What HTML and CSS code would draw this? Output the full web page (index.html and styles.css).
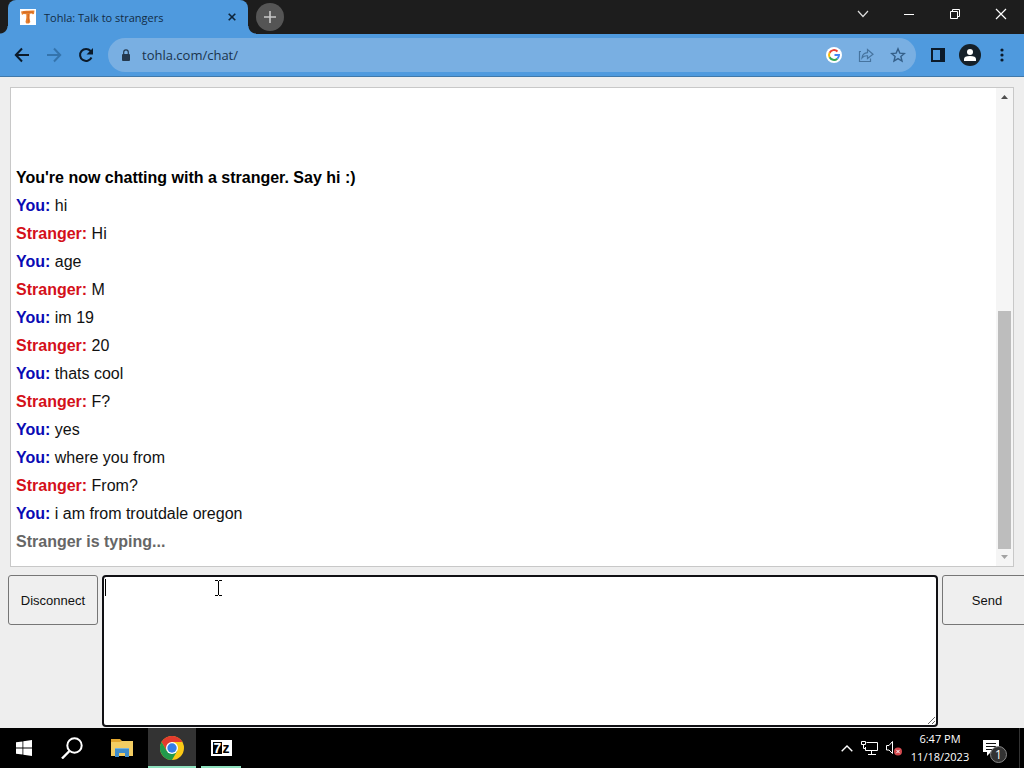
FILE: index.html
```
<!DOCTYPE html>
<html lang="en">
<head>
<meta charset="utf-8">
<title>Tohla: Talk to strangers</title>
<link rel="stylesheet" href="styles.css">
</head>
<body>
<div class="desktop">
  <header class="titlebar">
    <div class="tab">
      <svg class="favicon" width="16" height="16" viewBox="0 0 16 16"><path fill="#fff" d="M0 0h16v16H0z"/><path fill="#e8812f" d="M1 2.500q3.500-1 7-.7 3.500-.6 6.500-.3L14 5l-1.500.3L12 4.500 9.800 4.800 9.600 9l.7 4-1.300 1.500H6.300L5.500 13l.8-4V5.200L3.500 5 2 6z"/><path d="M3 3.200h10M8.300 5v8.500" stroke="#c9601c" stroke-width=".8" fill="none"/></svg>
      <span class="tab-title">Tohla: Talk to strangers</span>
      <button class="tab-close" aria-label="Close tab"><svg width="8" height="8" viewBox="0 0 8 8"><path d="M.7.7l6.600 6.600M7.300.7L.7 7.300" stroke="#0e2438" stroke-width="1.600"/></svg></button>
    </div>
    <button class="new-tab" aria-label="New tab"><svg width="12" height="12" viewBox="0 0 12 12"><path d="M6 0v12M0 6h12" stroke="#c8c8c8" stroke-width="1.600"/></svg></button>
    <div class="window-controls">
      <button aria-label="Search tabs"><svg width="12" height="12" viewBox="0 0 12 12"><path d="M1 3l5 5.500L11 3" fill="none" stroke="#ddd" stroke-width="1.200"/></svg></button>
      <button aria-label="Minimize"><svg width="12" height="12" viewBox="0 0 12 12"><path d="M1 6.500h10" stroke="#fff"/></svg></button>
      <button aria-label="Restore"><svg width="12" height="12" viewBox="0 0 12 12"><path d="M1.500 3.500h7v7h-7zM3.500 3V1.500h7v7H9" fill="none" stroke="#fff"/></svg></button>
      <button aria-label="Close"><svg width="12" height="12" viewBox="0 0 12 12"><path d="M1 1l10 10M11 1L1 11" stroke="#fff" stroke-width="1.200"/></svg></button>
    </div>
  </header>

  <nav class="toolbar">
    <button class="nav-btn" aria-label="Back"><svg width="16" height="16" viewBox="0 0 16 16"><path d="M15 8H2M8 1.500L1.800 8 8 14.500" fill="none" stroke="#0b1a2a" stroke-width="2"/></svg></button>
    <button class="nav-btn" aria-label="Forward"><svg width="16" height="16" viewBox="0 0 16 16"><path d="M1 8h13M8 1.500L14.200 8 8 14.500" fill="none" stroke="#3474ad" stroke-width="2"/></svg></button>
    <button class="nav-btn" aria-label="Reload"><svg width="16" height="16" viewBox="0 0 16 16"><path d="M13.500 10.500A6 6 0 1 1 12.600 4L13.500 5" fill="none" stroke="#0b1a2a" stroke-width="2"/><path d="M15 1v6.500H8.500z" fill="#0b1a2a"/></svg></button>
    <div class="address">
      <svg width="10" height="13" viewBox="0 0 10 13"><path d="M2 5h6q1 0 1 1v5q0 1-1 1H2q-1 0-1-1V6q0-1 1-1z" fill="#24384d"/><path d="M2.700 5.500V3.200a2.300 2.300 0 0 1 4.600 0v2.300" fill="none" stroke="#24384d" stroke-width="1.200"/></svg>
      <input class="url" type="text" aria-label="Address" value="tohla.com/chat/">
      <button aria-label="Google"><svg width="16" height="16" viewBox="0 0 16 16"><circle cx="8" cy="8" r="8" fill="#fff"/><g fill="none" stroke-width="2"><path d="M11.500 4.500A5 5 0 0 0 3.600 5.700" stroke="#ea4335"/><path d="M3.600 5.700a5 5 0 0 0 0 4.600" stroke="#fbbc05"/><path d="M3.600 10.300a5 5 0 0 0 7.700 1.400" stroke="#34a853"/><path d="M11.300 11.700A5 5 0 0 0 13 8H8.500" stroke="#4285f4"/></g></svg></button>
      <button aria-label="Share"><svg width="16" height="16" viewBox="0 0 16 16"><path d="M3 4.500H1.500v10h11V11.500M4 11q.5-5 5.500-5.300V2.500l5.500 4.800-5.500 4.200V8.800Q6 8.500 4 11z" fill="none" stroke="#46749f" stroke-width="1.200"/></svg></button>
      <button aria-label="Bookmark"><svg width="16" height="16" viewBox="0 0 16 16"><path d="M8 1.800l1.800 4.300 4.600.4-3.500 3 1.100 4.500L8 11.600 4 14l1.100-4.500-3.500-3 4.600-.4z" fill="none" stroke="#345f89" stroke-width="1.400"/></svg></button>
    </div>
    <button class="tool-btn" aria-label="Side panel"><svg width="14" height="14" viewBox="0 0 14 14"><path d="M1 1h12v12H1z" fill="none" stroke="#0b1a2a" stroke-width="2"/><path d="M9 1h4v12H9z" fill="#0b1a2a"/></svg></button>
    <button class="tool-btn" aria-label="Profile"><svg width="22" height="22" viewBox="0 0 22 22"><circle cx="11" cy="11" r="11" fill="#152029"/><circle cx="11" cy="8" r="3" fill="#fff"/><path d="M5 17v-2q0-3 6-3t6 3v2z" fill="#fff"/></svg></button>
    <button class="tool-btn" aria-label="Menu"><svg width="14" height="14" viewBox="0 0 14 14"><g fill="#0b1a2a"><circle cx="7" cy="2" r="1.600"/><circle cx="7" cy="7" r="1.600"/><circle cx="7" cy="12" r="1.600"/></g></svg></button>
  </nav>

  <main class="page">
    <section class="chat">
      <div class="log">
        <p class="status">You're now chatting with a stranger. Say hi :)</p>
        <p><b class="you">You:</b> hi</p>
        <p><b class="stranger">Stranger:</b> Hi</p>
        <p><b class="you">You:</b> age</p>
        <p><b class="stranger">Stranger:</b> M</p>
        <p><b class="you">You:</b> im 19</p>
        <p><b class="stranger">Stranger:</b> 20</p>
        <p><b class="you">You:</b> thats cool</p>
        <p><b class="stranger">Stranger:</b> F?</p>
        <p><b class="you">You:</b> yes</p>
        <p><b class="you">You:</b> where you from</p>
        <p><b class="stranger">Stranger:</b> From?</p>
        <p><b class="you">You:</b> i am from troutdale oregon</p>
        <p class="status typing">Stranger is typing...</p>
      </div>
      <div class="scrollbar" aria-hidden="true">
        <svg width="7" height="4" viewBox="0 0 7 4"><path d="M3.500 0L7 4H0z" fill="#505050"/></svg>
        <div class="track"><div class="thumb"></div></div>
        <svg width="7" height="4" viewBox="0 0 7 4"><path d="M0 0h7L3.500 4z" fill="#a3a3a3"/></svg>
      </div>
    </section>
    <form class="composer">
      <button class="chat-btn" type="button">Disconnect</button>
      <div class="message-wrap">
        <textarea class="message" aria-label="Message"></textarea>
        <span class="caret"></span>
        <svg class="pointer" width="7" height="16" viewBox="0 0 7 16"><path d="M0 .5h3M4 .5h3M3.500 1v14M0 15.500h3M4 15.500h3" stroke="#000" fill="none"/></svg>
      </div>
      <button class="chat-btn" type="button">Send</button>
    </form>
  </main>

  <footer class="taskbar">
    <button class="task" aria-label="Start"><svg width="16" height="16" viewBox="0 0 16 16"><path fill="#fff" d="M0 2.300L6.500 1.400v6.200H0zM7.300 1.300L16 0v7.600H7.300zM0 8.400h6.500v6.200L0 13.700zM7.300 8.400H16V16l-8.700-1.300z"/></svg></button>
    <button class="task" aria-label="Search"><svg width="22" height="22" viewBox="0 0 22 22"><circle cx="13.500" cy="8.500" r="7.200" fill="none" stroke="#fff" stroke-width="2"/><path d="M8.500 14L1 21.500" stroke="#fff" stroke-width="2.400"/></svg></button>
    <button class="task explorer" aria-label="File Explorer"><svg width="22" height="18" viewBox="0 0 22 18"><path fill="#e3a72f" d="M0 0h9l2 2h11v3H0z"/><path fill="#f3cd62" d="M0 3h9l2-1h11v15H0z"/><path fill="#3f8dcc" d="M4 9h14v9h-4v-4H8v4H4z"/><path fill="#78b4dd" d="M4 9h14v1H4z"/></svg></button>
    <button class="task active" aria-label="Chrome"><svg width="24" height="24" viewBox="0 0 24 24"><circle cx="12" cy="12" r="12" fill="#fbc916"/><path fill="#e33b2e" d="M1.600 6A12 12 0 0 1 22.400 6H12L6.800 15z"/><path fill="#229a4c" d="M1.600 6A12 12 0 0 0 12 24L17.200 15H6.800z"/><circle cx="12" cy="12" r="6" fill="#fff"/><circle cx="12" cy="12" r="4.700" fill="#347de8"/></svg></button>
    <button class="task running" aria-label="7-Zip"><span class="zip"><span class="zip-seven">7</span><span>z</span></span></button>
    <div class="tray">
      <svg width="12" height="7" viewBox="0 0 12 7"><path d="M.7 6.300L6 1l5.300 5.300" fill="none" stroke="#fff" stroke-width="1.400"/></svg>
      <svg width="17" height="14" viewBox="0 0 17 14"><path d="M5.500 1.500h11v8h-12V6M10.500 10v3M7 13.500h8M.5.500h4v3h-4zM2.500 4v3.500h2" fill="none" stroke="#fff"/></svg>
      <svg width="16" height="15" viewBox="0 0 16 15"><path d="M.5 4.500H3l3.500-4v12L3 9H.5z" fill="none" stroke="#fff"/><circle cx="12" cy="10.500" r="4" fill="#d2474c"/><path d="M10.300 8.800l3.400 3.400M13.700 8.800l-3.400 3.400" stroke="#fff"/></svg>
      <time class="clock"><span>6:47 PM</span><span>11/18/2023</span></time>
      <div class="notify">
        <svg width="16" height="16" viewBox="0 0 16 16"><path fill="#fff" d="M0 0h16v12H8l-4 4v-4H0z"/><path d="M3 3.500h10M3 6.500h10M3 9.500h7" stroke="#111"/></svg>
        <span class="badge">1</span>
      </div>
    </div>
  </footer>
</div>
</body>
</html>
```
FILE: styles.css
```
* { box-sizing: border-box; }
body { margin: 0; font-family: "Liberation Sans", Arial, sans-serif; }
button { border: 0; padding: 0; background: none; font: inherit; color: inherit; }
svg { display: block; flex: none; }

.desktop { display: flex; flex-direction: column; height: 100vh; overflow: hidden; }

.titlebar { display: flex; height: 34px; padding-left: 8px; background: #1d1d1d; }
.tab {
  position: relative; display: flex; align-items: center; gap: 8px; width: 240px;
  padding: 0 12px; background: #4f9ade; border-radius: 8px 8px 0 0;
}
.tab::before, .tab::after { content: ""; position: absolute; bottom: 0; width: 8px; height: 8px; }
.tab::before { right: 100%; background: radial-gradient(circle at 0 0, #1d1d1d 7px, #4f9ade 8px); }
.tab::after { left: 100%; background: radial-gradient(circle at 100% 0, #1d1d1d 7px, #4f9ade 8px); }
.tab-title { flex: 1; font: 11px "Open Sans", sans-serif; color: #122c45; white-space: nowrap; }
.tab-close { display: grid; place-items: center; width: 8px; height: 16px; }
.new-tab {
  display: grid; place-items: center; width: 28px; height: 28px; margin: 3px 0 0 8px;
  border-radius: 50%; background: #555;
}
.window-controls { display: flex; margin-left: auto; height: 28px; }
.window-controls button { display: grid; place-items: center; width: 46px; }

.toolbar {
  display: flex; align-items: center; height: 43px; padding: 0 11px 0 6px;
  background: #4f9ade; border-bottom: 1px solid #4079aa;
}
.nav-btn { display: grid; place-items: center; width: 32px; height: 32px; }
.address {
  display: flex; flex: 1; align-items: center; gap: 16px; height: 34px; min-width: 0;
  margin: 0 11px 0 6px; padding: 0 10px 0 13px; border-radius: 17px; background: #79afe2;
}
.url {
  flex: 1; min-width: 0; margin-left: -5px; padding: 0; border: 0; background: none;
  font: 13px "Open Sans", sans-serif; color: #1a334c; outline: 0;
}
.tool-btn { display: grid; place-items: center; width: 22px; height: 32px; margin-right: 10px; }
.tool-btn:last-child { margin-right: 0; }

.page { display: flex; flex: 1; flex-direction: column; min-height: 0; padding-top: 10px; background: #eee; }
.chat { display: flex; flex: 1; min-height: 0; margin: 0 10px; border: 1px solid #c8c8c8; background: #fff; }
.log {
  display: flex; flex: 1; flex-direction: column; justify-content: flex-end;
  padding: 0 5px 10px; font-size: 16px; line-height: 28px; color: #111;
}
.log p { margin: 0; }
.status { font-weight: bold; color: #000; }
.log .typing { color: #666; }
.you { color: #0a0ab4; }
.stranger { color: #d4101a; }
.scrollbar {
  display: flex; flex-direction: column; align-items: center; width: 17px;
  padding: 7px 0; background: #f5f5f5;
}
.track { display: flex; flex: 1; flex-direction: column; justify-content: flex-end; padding-bottom: 6px; }
.thumb { width: 13px; height: 53%; background: #bdbdbd; }

.composer { display: flex; gap: 4px; margin: 8px -8px 0 8px; }
.chat-btn {
  flex: none; width: 90px; height: 50px; border: 1px solid #767676; border-radius: 3px;
  background: #efefef; font-size: 13px; color: #111;
}
.message-wrap { position: relative; display: flex; flex: 1; }
.message {
  flex: 1; height: 152px; margin: 0 0 1px; padding: 2px; border: 2px solid #101014; border-radius: 4px;
  outline: 0; background: #fff; font: 13px "Liberation Mono", monospace; resize: both;
}
.caret { position: absolute; left: 3px; top: 4px; width: 1px; height: 17px; background: #000; }
.pointer { position: absolute; left: 113px; top: 5px; }

.taskbar { display: flex; height: 40px; background: #000; color: #fff; }
.task { display: grid; place-items: center; width: 48px; }
.explorer { width: 52px; }
.active { width: 48px; padding-top: 2px; background: #333; border-bottom: 2px solid #8ee0bd; }
.running { width: 40px; margin-left: 5px; padding-top: 2px; border-bottom: 2px solid #8ee0bd; }
.zip {
  display: flex; align-items: center; justify-content: space-evenly; width: 21px; height: 16px;
  border: 2px solid #fff; background: #fff; color: #000;
  font: bold 14px/12px "Liberation Sans", sans-serif;
}
.zip-seven { padding: 0 1px; background: #000; color: #fff; }
.tray { display: flex; align-items: center; gap: 8px; margin-left: auto; padding-right: 4px; }
.clock {
  display: flex; flex-direction: column; align-items: center; width: 60px;
  font: 11px/18px "Open Sans", sans-serif; white-space: nowrap;
}
.notify { position: relative; display: flex; align-items: center; width: 42px; height: 40px; padding-left: 5px; border-right: 1px solid #333; }
.badge {
  position: absolute; left: 12px; top: 18px; width: 17px; height: 17px; border: 1px solid #888;
  border-radius: 50%; background: #333; font: 12px/15px "Open Sans", sans-serif; text-align: center;
}
```
